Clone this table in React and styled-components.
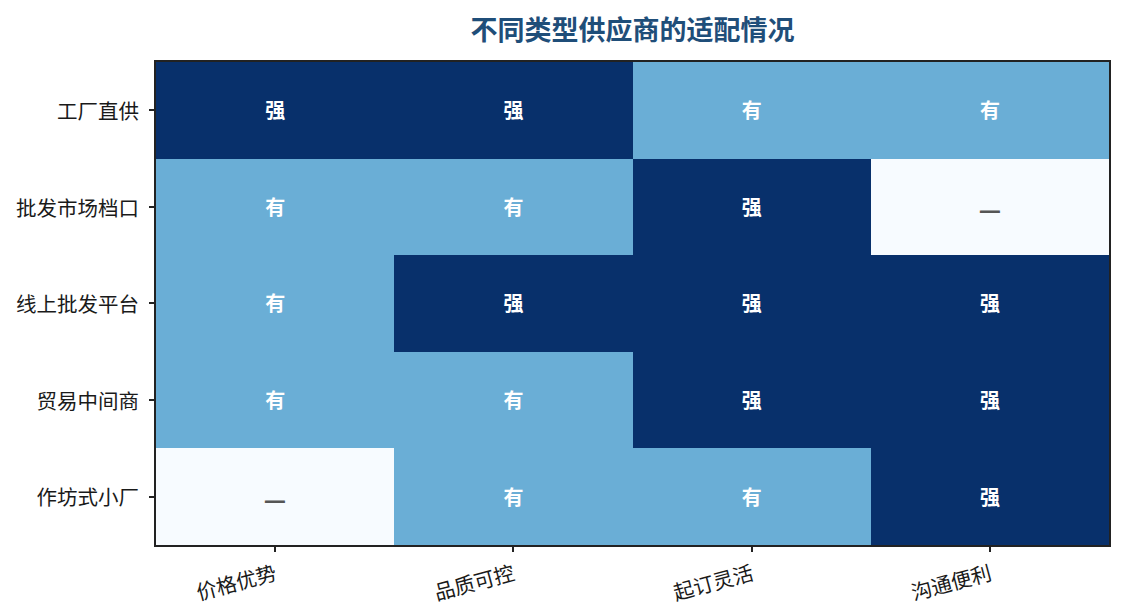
import React from 'react'
import styled, { createGlobalStyle } from 'styled-components'

const GlobalStyle = createGlobalStyle`
    body {
        margin: 0;
        background: #ffffff;
        font-family: "Noto Sans CJK SC", "DejaVu Sans", sans-serif;
    }
`

const rows = ['工厂直供', '批发市场档口', '线上批发平台', '贸易中间商', '作坊式小厂']
const cols = ['价格优势', '品质可控', '起订灵活', '沟通便利']

// 2 = 强, 1 = 有, 0 = —
const data = [
    [2, 2, 1, 1],
    [1, 1, 2, 0],
    [1, 2, 2, 2],
    [1, 1, 2, 2],
    [0, 1, 1, 2],
]

const labels = ['—', '有', '强']
const fills = ['#f7fbff', '#6aaed6', '#08306b']

function App() {
    return (
        <Figure>
            <GlobalStyle />
            <Title>不同类型供应商的适配情况</Title>

            <YAxis>
                {rows.map(r => (
                    <YTickRow key={r}>
                        <YLabel>{r}</YLabel>
                        <YTick />
                    </YTickRow>
                ))}
            </YAxis>

            <Axes>
                {data.map((row, i) =>
                    row.map((v, j) => (
                        <Cell key={i + '-' + j} $fill={fills[v]}>
                            <CellText $empty={v === 0}>{labels[v]}</CellText>
                        </Cell>
                    ))
                )}
            </Axes>

            <XAxis>
                {cols.map(c => (
                    <XTickCol key={c}>
                        <XTick />
                        <XLabelSlot>
                            <XLabel>{c}</XLabel>
                        </XLabelSlot>
                    </XTickCol>
                ))}
            </XAxis>
        </Figure>
    )
}

export default App

const Figure = styled.div`
    width: 1125px;
    height: 615px;
    display: grid;
    grid-template-columns: 154px 957px 14px;
    grid-template-rows: 60px 487px 68px;
    overflow: hidden;
    background: #fff;
`

const Title = styled.h1`
    grid-column: 2;
    grid-row: 1;
    margin: 0;
    padding-top: 13px;
    text-align: center;
    font-size: 27px;
    line-height: 32px;
    font-weight: 700;
    color: #1f4e79;
`

const YAxis = styled.div`
    grid-column: 1;
    grid-row: 2;
    display: flex;
    flex-direction: column;
    padding: 2px 0;
`

const YTickRow = styled.div`
    flex: 1;
    display: flex;
    align-items: center;
    justify-content: flex-end;
`

const YLabel = styled.span`
    font-size: 20.5px;
    line-height: 1;
    color: #1a1a1a;
    margin-right: 10px;
    white-space: nowrap;
`

const YTick = styled.div`
    width: 5px;
    height: 2px;
    background: #222;
`

const Axes = styled.div`
    grid-column: 2;
    grid-row: 2;
    border: 2px solid #222;
    display: grid;
    grid-template-columns: repeat(4, 1fr);
    grid-template-rows: repeat(5, 1fr);
`

const Cell = styled.div`
    background: ${p => p.$fill};
    display: flex;
    align-items: center;
    justify-content: center;
`

const CellText = styled.span`
    font-size: 20px;
    line-height: 1;
    font-weight: ${p => (p.$empty ? 400 : 700)};
    color: ${p => (p.$empty ? '#555555' : '#ffffff')};
    ${p => p.$empty && 'display: inline-block; transform: scale(1.25, 2);'}
`

const XAxis = styled.div`
    grid-column: 2;
    grid-row: 3;
    display: grid;
    grid-template-columns: repeat(4, 1fr);
    padding: 0 2px;
`

const XTickCol = styled.div`
    display: flex;
    flex-direction: column;
    align-items: center;
`

const XTick = styled.div`
    width: 2px;
    height: 5px;
    background: #222;
`

const XLabelSlot = styled.div`
    align-self: flex-start;
    width: calc(50% - 2px);
    display: flex;
    justify-content: flex-end;
    padding-top: 9px;
`

const XLabel = styled.span`
    display: inline-block;
    font-size: 20.5px;
    line-height: 1;
    color: #1a1a1a;
    white-space: nowrap;
    transform: rotate(-15deg);
    transform-origin: top right;
`
